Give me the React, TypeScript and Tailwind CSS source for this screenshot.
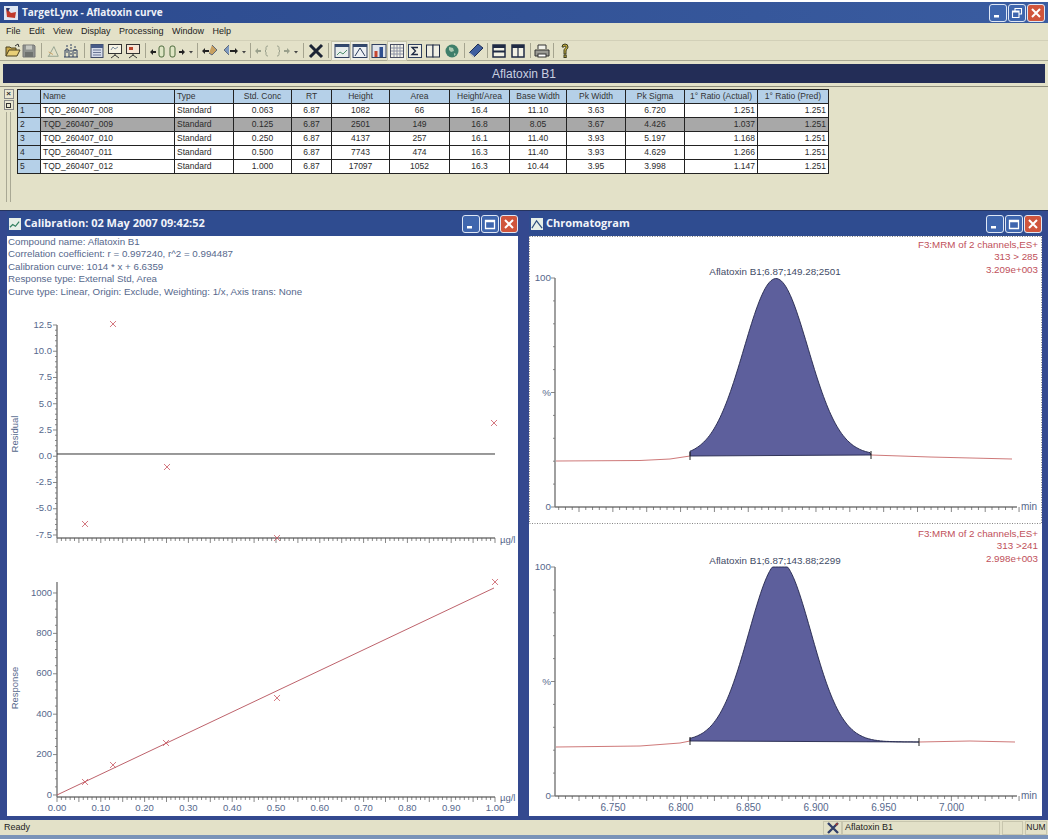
import React from "react";

const SANS = "font-['Liberation_Sans',Arial,sans-serif]";

const columns = [
  { name: "", w: 23, align: "left" },
  { name: "Name", w: 134, align: "left" },
  { name: "Type", w: 59, align: "left" },
  { name: "Std. Conc", w: 58, align: "center" },
  { name: "RT", w: 40, align: "center" },
  { name: "Height", w: 58, align: "center" },
  { name: "Area", w: 60, align: "center" },
  { name: "Height/Area", w: 60, align: "center" },
  { name: "Base Width", w: 57, align: "center" },
  { name: "Pk Width", w: 59, align: "center" },
  { name: "Pk Sigma", w: 59, align: "center" },
  { name: "1° Ratio (Actual)", w: 73, align: "right" },
  { name: "1° Ratio (Pred)", w: 71, align: "right" },
];

const rows = [
  ["1", "TQD_260407_008", "Standard", "0.063", "6.87", "1082", "66", "16.4", "11.10", "3.63", "6.720", "1.251", "1.251"],
  ["2", "TQD_260407_009", "Standard", "0.125", "6.87", "2501", "149", "16.8", "8.05", "3.67", "4.426", "1.037", "1.251"],
  ["3", "TQD_260407_010", "Standard", "0.250", "6.87", "4137", "257", "16.1", "11.40", "3.93", "5.197", "1.168", "1.251"],
  ["4", "TQD_260407_011", "Standard", "0.500", "6.87", "7743", "474", "16.3", "11.40", "3.93", "4.629", "1.266", "1.251"],
  ["5", "TQD_260407_012", "Standard", "1.000", "6.87", "17097", "1052", "16.3", "10.44", "3.95", "3.998", "1.147", "1.251"],
];

function WinButton({ kind }: { kind: "min" | "max" | "restore" | "close" }) {
  const bg = kind === "close" ? "bg-[#d0553c]" : "bg-[#3f66ae]";
  return (
    <div className={`flex h-[18px] w-[18px] items-center justify-center rounded-[3px] border border-[#dfe7f5] ${bg}`}>
      <svg width="12" height="12" viewBox="0 0 12 12">
        {kind === "min" && <rect x="2" y="8" width="5" height="2.5" fill="#fff" />}
        {kind === "max" && <path d="M1.5 2.5h9v8h-9z M1.5 3.5h9" fill="none" stroke="#fff" strokeWidth="1.3" />}
        {kind === "restore" && <path d="M4 3.5V1.5h6.5v5.5H8.5 M1.5 4h6.5v6.5H1.5z M1.5 5h6.5" fill="none" stroke="#fff" strokeWidth="1.1" />}
        {kind === "close" && <path d="M2 2l8 8M10 2l-8 8" stroke="#fff" strokeWidth="2" />}
      </svg>
    </div>
  );
}

function Tool({ k }: { k: string }) {
  const s = { width: 16, height: 16, viewBox: "0 0 16 16" };
  switch (k) {
    case "open":
      return <svg {...s}><path d="M1 13V4h4l1 1h5v2" fill="#c9a94a" stroke="#4a4020" /><path d="M1 13l3-6h11l-3 6z" fill="#e8cf78" stroke="#4a4020" /><path d="M10 3l3-2 1 3" fill="none" stroke="#333" /></svg>;
    case "save":
      return <svg {...s}><path d="M2 2h11l1 1v11H2z" fill="#8f928f" stroke="#777" /><rect x="5" y="2.5" width="6" height="4" fill="#c6c8c2" /><rect x="4" y="9" width="8" height="5" fill="#6f726f" /></svg>;
    case "tri":
      return <svg {...s}><path d="M2 14h12M3 14l6-11 5 11" fill="none" stroke="#8d9d8a" /><path d="M3 9l5 3" stroke="#c9a060" /></svg>;
    case "bars":
      return <svg {...s}><path d="M1 14h14M2 14V7h4v7M10 14V7h4v7" fill="none" stroke="#2f3f5f" /><path d="M4 2v9M8 1v12M12 3v8" stroke="#2f3f5f" strokeDasharray="2 1" /></svg>;
    case "cal":
      return <svg {...s}><rect x="2" y="1.5" width="12" height="13" fill="#d6dcea" stroke="#3f4a66" /><rect x="2" y="1.5" width="12" height="3.5" fill="#465a88" /><path d="M4 7h8M4 9.5h8M4 12h8" stroke="#6b7796" /></svg>;
    case "board":
      return <svg {...s}><rect x="1.5" y="1.5" width="13" height="9" fill="#f6f3e4" stroke="#333" /><path d="M4 7l2-3 2 2 3-2" fill="none" stroke="#7f8f9f" /><path d="M8 10.5V12M4 15l4-3 4 3" fill="none" stroke="#333" /></svg>;
    case "boardr":
      return <svg {...s}><rect x="1.5" y="1.5" width="13" height="9" fill="#f4e4d4" stroke="#333" /><rect x="4" y="4" width="4" height="3" fill="#b8432c" /><path d="M8 10.5V12M4 15l4-3 4 3" fill="none" stroke="#333" /></svg>;
    case "lb":
      return <svg {...s}><path d="M0 9l3-3v2h3v2H3v2z" fill="#222" /><rect x="9" y="3" width="5" height="11" rx="2" fill="#dfe6c4" stroke="#4c6a3c" /></svg>;
    case "br":
      return <svg {...s}><rect x="1" y="3" width="5" height="11" rx="2" fill="#dfe6c4" stroke="#4c6a3c" /><path d="M16 9l-3-3v2h-3v2h3v2z" fill="#222" /></svg>;
    case "drop":
      return <svg width="6" height="16" viewBox="0 0 6 16"><path d="M1 8h4l-2 2.5z" fill="#444" /></svg>;
    case "dl":
      return <svg {...s}><path d="M0 8l3-3v2h4v2H3v2z" fill="#222" /><path d="M10 2l5 5-5 5-3-2" fill="#c8a060" stroke="#5f6a7a" /></svg>;
    case "dr":
      return <svg {...s}><path d="M7 2L2 7l5 5" fill="#7f9ac0" stroke="#5f6a7a" /><path d="M16 8l-3-3v2H8v2h5v2z" fill="#222" /></svg>;
    case "bl":
      return <svg {...s}><path d="M0 8l3-3v2h3v2H3v2z" fill="#9aa08c" /><path d="M13 3c-2 0-2 1-2 2v2l-1 1 1 1v2c0 1 0 2 2 2" fill="none" stroke="#9aa08c" /></svg>;
    case "br2":
      return <svg {...s}><path d="M3 3c2 0 2 1 2 2v2l1 1-1 1v2c0 1 0 2-2 2" fill="none" stroke="#9aa08c" /><path d="M16 8l-3-3v2h-3v2h3v2z" fill="#9aa08c" /></svg>;
    case "x":
      return <svg {...s}><path d="M2 2l12 12M14 2L2 14" stroke="#1c2434" strokeWidth="3" /></svg>;
    case "cal2":
      return <svg {...s}><rect x="1" y="1.5" width="14" height="13" fill="#e8ecec" stroke="#2f3f5f" /><rect x="1" y="1.5" width="14" height="2.5" fill="#33486f" /><path d="M3 12l3-3 3 2 4-4" fill="none" stroke="#4f8f6f" /></svg>;
    case "chrom":
      return <svg {...s}><rect x="1" y="1.5" width="14" height="13" fill="#eef1f4" stroke="#2f3f5f" /><rect x="1" y="1.5" width="14" height="2.5" fill="#33486f" /><path d="M3 13l5-8 5 8" fill="none" stroke="#2f3f5f" /></svg>;
    case "barc":
      return <svg {...s}><rect x="1" y="1.5" width="14" height="13" fill="#dfe4ea" stroke="#2f3f5f" /><rect x="3.5" y="8" width="3" height="6" fill="#c5472f" /><rect x="8.5" y="4" width="3.5" height="10" fill="#2f4f8f" /></svg>;
    case "grid":
      return <svg {...s}><rect x="1.5" y="1.5" width="13" height="13" fill="#f4f3e8" stroke="#4a4f64" /><path d="M5 2v12M8 2v12M11 2v12M2 5h12M2 8h12M2 11h12" stroke="#8b90a4" /></svg>;
    case "sigma":
      return <svg {...s}><rect x="1.5" y="1.5" width="13" height="13" fill="#f0efe4" stroke="#2f3f5f" /><path d="M11 4.5H5l3.5 3.5L5 11.5h6" fill="none" stroke="#1f2a44" strokeWidth="1.3" /></svg>;
    case "book":
      return <svg {...s}><rect x="1.5" y="2" width="6.5" height="12" fill="#f0efe4" stroke="#1f2a44" /><rect x="8" y="2" width="6.5" height="12" fill="#f0efe4" stroke="#1f2a44" /></svg>;
    case "globe":
      return <svg {...s}><circle cx="8" cy="8" r="6.5" fill="#3f7f6a" /><path d="M5 4l4 1 1 3-3 1-2-2zM10 10l2 1-2 2z" fill="#a9c8b0" /></svg>;
    case "bbook":
      return <svg {...s}><path d="M1 10L10 1l5 4-9 9z" fill="#3f5f9f" stroke="#1f2f55" /><path d="M1 10l5 4" stroke="#d8d8c8" strokeWidth="1.5" /></svg>;
    case "winh":
      return <svg {...s}><rect x="2" y="2" width="12" height="12" fill="#f2f1e4" stroke="#1f2a44" strokeWidth="1.5" /><rect x="2" y="2" width="12" height="3" fill="#1f2a44" /><path d="M2 8.5h12" stroke="#1f2a44" strokeWidth="2" /></svg>;
    case "winv":
      return <svg {...s}><rect x="2" y="2" width="12" height="12" fill="#f2f1e4" stroke="#1f2a44" strokeWidth="1.5" /><rect x="2" y="2" width="12" height="3" fill="#1f2a44" /><path d="M8 3v11" stroke="#1f2a44" strokeWidth="1.2" /></svg>;
    case "print":
      return <svg {...s}><path d="M4 6V2h8v4" fill="#f2f2ea" stroke="#333" /><path d="M1 7h14v6H1z" fill="#9a9a94" stroke="#333" /><rect x="4" y="11" width="8" height="3" fill="#fff" stroke="#333" /></svg>;
    case "help":
      return <svg {...s}><path d="M5 4a3 3 0 116 0c0 2-2 2-2 4v3H7V7c0-1 2-2 2-3a1 1 0 00-2 0z" fill="#c9b23c" stroke="#3a3a20" /><rect x="7" y="12" width="2.2" height="2.5" fill="#c9b23c" stroke="#3a3a20" /></svg>;
    default:
      return null;
  }
}

const toolbar: [string, number, boolean?][] = [
  ["open", 17], ["save", 16], ["sep", 9], ["tri", 14], ["bars", 22], ["sep", 5], ["cal", 19], ["board", 18], ["boardr", 18], ["sep", 7],
  ["lb", 18], ["br", 20], ["drop", 8], ["sep", 5], ["dl", 20], ["dr", 20], ["drop", 8], ["sep", 5], ["bl", 19], ["br2", 20], ["drop", 8], ["sep", 7],
  ["x", 18], ["sep", 7], ["cal2", 19, true], ["chrom", 18, true], ["barc", 19], ["grid", 18, true], ["sigma", 18], ["book", 18], ["globe", 20], ["sep", 5],
  ["bbook", 18], ["sep", 4], ["winh", 19], ["winv", 20], ["sep", 5], ["print", 18], ["sep", 5], ["help", 18],
];

const TEXT = "#56688c";
const AXIS = "#777777";
const chartText = { fontFamily: "'Liberation Sans', Arial, sans-serif", fontSize: 9.5 };
const chromText = { fontFamily: "'Liberation Sans', Arial, sans-serif", fontSize: 9.8 };

function Cross({ x, y }: { x: number; y: number }) {
  return <path d={`M${x - 3} ${y - 3}l6 6M${x + 3} ${y - 3}l-6 6`} stroke="#c9565f" strokeWidth="0.8" fill="none" />;
}

function XTicks({ y, x0, x1, major, minor, phase = 0 }: { y: number; x0: number; x1: number; major: number; minor: number; phase?: number }) {
  const items: React.ReactNode[] = [];
  const step = major / minor;
  const n = Math.round((x1 - x0) / step);
  for (let i = 0; i <= n; i++) {
    const x = x0 + i * step;
    const isMajor = Math.abs(((x - x0 - phase) / major) - Math.round((x - x0 - phase) / major)) < 0.02;
    items.push(<line key={i} x1={x} x2={x} y1={y} y2={y + (isMajor ? 5 : 3)} stroke="#555" strokeWidth="0.7" />);
  }
  return <g>{items}</g>;
}

function YTicks({ x, y0, y1, step, majorEvery }: { x: number; y0: number; y1: number; step: number; majorEvery: number }) {
  const items: React.ReactNode[] = [];
  const n = Math.round((y1 - y0) / step);
  for (let i = 0; i <= n; i++) {
    const y = y0 + i * step;
    const m = i % majorEvery === 0;
    items.push(<line key={i} x1={x - (m ? 4 : 2)} x2={x} y1={y} y2={y} stroke="#555" strokeWidth="0.7" />);
  }
  return <g>{items}</g>;
}

function CalibrationChart() {
  const residual = ["12.5", "10.0", "7.5", "5.0", "2.5", "0.0", "-2.5", "-5.0", "-7.5"];
  const resp = [["1000", 593], ["800", 633], ["600", 673], ["400", 714], ["200", 754], ["0", 795]] as [string, number][];
  const xl = ["0.00", "0.10", "0.20", "0.30", "0.40", "0.50", "0.60", "0.70", "0.80", "0.90", "1.00"];
  return (
    <svg className="block min-h-0 w-full flex-1" viewBox="7 298 511 518" preserveAspectRatio="none" style={chartText}>
      {residual.map((t, i) => (
        <text key={t} x={52} y={328 + i * 26.2} textAnchor="end" fill={TEXT}>{t}</text>
      ))}
      <text transform="translate(18 434) rotate(-90)" textAnchor="middle" fill={TEXT}>Residual</text>
      <YTicks x={57} y0={325} y1={535} step={5.25} majorEvery={5} />
      <line x1={57} x2={57} y1={325} y2={538} stroke={AXIS} strokeWidth="1.4" />
      <line x1={57} x2={495} y1={538} y2={538} stroke={AXIS} strokeWidth="1.4" />
      <XTicks y={538} x0={57} x1={495} major={21.9} minor={5} />
      <line x1={57} x2={495} y1={454} y2={454} stroke="#333" strokeWidth="1" />
      <text x={500} y={543} fill={TEXT}>µg/l</text>
      <Cross x={85} y={524} /><Cross x={113} y={324} /><Cross x={167} y={467} /><Cross x={277} y={538} /><Cross x={494} y={423} />

      {resp.map(([t, y]) => (
        <text key={t} x={52} y={y + 3} textAnchor="end" fill={TEXT}>{t}</text>
      ))}
      <text transform="translate(18 688) rotate(-90)" textAnchor="middle" fill={TEXT}>Response</text>
      <YTicks x={57} y0={593} y1={795} step={8.08} majorEvery={5} />
      <line x1={57} x2={57} y1={582} y2={797} stroke={AXIS} strokeWidth="1.4" />
      <line x1={57} x2={495} y1={797} y2={797} stroke={AXIS} strokeWidth="1.4" />
      <XTicks y={797} x0={57} x1={495} major={21.9} minor={5} />
      <text x={500} y={801} fill={TEXT}>µg/l</text>
      {xl.map((t, i) => (
        <text key={t} x={57 + i * 43.8} y={811.5} textAnchor="middle" fill={TEXT}>{t}</text>
      ))}
      <line x1={57} y1={795} x2={494} y2={588} stroke="#b5505a" strokeWidth="0.9" />
      <Cross x={85} y={782} /><Cross x={113} y={765} /><Cross x={166} y={743} /><Cross x={277} y={698} /><Cross x={495} y={582} />
    </svg>
  );
}

function peakPath(x0: number, x1: number, cx: number, top: number, base0: number, base1: number, sl: number, sr: number, amp: number) {
  const pts: string[] = [];
  for (let x = x0; x <= x1; x += 1.5) {
    const s = x < cx ? sl : sr;
    const t = (x - x0) / (x1 - x0);
    const b = base0 + (base1 - base0) * t;
    const y = Math.max(top, b - amp * Math.exp(-((x - cx) ** 2) / (2 * s * s)));
    pts.push(`${x.toFixed(1)} ${y.toFixed(1)}`);
  }
  return `M${x0} ${base0}L${pts.join("L")}L${x1} ${base1}Z`;
}

function ChromPlot({ topY, label, lines, linesY, x0Peak, x1Peak, cx, base0, base1, sl, sr, amp, left, right, showLabels }: any) {
  const bottom = topY + 229;
  const xl = ["6.750", "6.800", "6.850", "6.900", "6.950", "7.000"];
  return (
    <g style={chromText}>
      {lines.map((t: string, i: number) => (
        <text key={t} x={1038} y={linesY + i * 12.4} textAnchor="end" fill="#c0505a">{t}</text>
      ))}
      <text x={775} y={topY - 3} textAnchor="middle" fill="#3f4c66">{label}</text>
      <text x={551} y={topY + 3} textAnchor="end" fill={TEXT}>100</text>
      <text x={551} y={topY + 118} textAnchor="end" fill={TEXT}>%</text>
      <text x={551} y={bottom + 3} textAnchor="end" fill={TEXT}>0</text>
      <YTicks x={555} y0={topY} y1={bottom} step={22.9} majorEvery={5} />
      <line x1={555} x2={555} y1={topY} y2={bottom} stroke={AXIS} strokeWidth="1.4" />
      <line x1={555} x2={1017} y1={bottom} y2={bottom} stroke={AXIS} strokeWidth="1.4" />
      <XTicks y={bottom} x0={558.7} x1={1017} major={33.85} minor={5} phase={20.3} />
      <text x={1021} y={bottom + 3} fill={TEXT} fontSize={10}>min</text>
      <path d={left} fill="none" stroke="#c86a6a" strokeWidth="0.9" />
      <path d={right} fill="none" stroke="#c86a6a" strokeWidth="0.9" />
      <path d={peakPath(x0Peak, x1Peak, cx, topY, base0, base1, sl, sr, amp)} fill="#5d5f9c" stroke="#23264c" strokeWidth="0.9" />
      <line x1={x0Peak} x2={x0Peak} y1={base0 - 4} y2={base0 + 4} stroke="#222" />
      <line x1={x1Peak} x2={x1Peak} y1={base1 - 4} y2={base1 + 4} stroke="#222" />
      {showLabels && xl.map((t, i) => (
        <text key={t} x={613 + i * 67.7} y={811} textAnchor="middle" fill={TEXT} fontSize={10}>{t}</text>
      ))}
    </g>
  );
}

function ChromChart() {
  return (
    <svg className="block h-full w-full" viewBox="529 236 513 580" preserveAspectRatio="none">
      <rect x={529.5} y={236.5} width={512} height={287} fill="none" stroke="#666" strokeWidth="0.8" strokeDasharray="1 1.5" />
      <ChromPlot
        topY={278} label="Aflatoxin B1;6.87;149.28;2501" lines={["F3:MRM of 2 channels,ES+", "313 > 285", "3.209e+003"]} linesY={248}
        x0Peak={690} x1Peak={871} cx={776} base0={456} base1={455} sl={32} sr={32} amp={177}
        left="M556 461L640 460.5L670 459L690 456" right="M871 455L930 457L1012 459"
      />
      <ChromPlot
        topY={567} label="Aflatoxin B1;6.87;143.88;2299" lines={["F3:MRM of 2 channels,ES+", "313 >241", "2.998e+003"]} linesY={537}
        x0Peak={690} x1Peak={919} cx={780} base0={741} base1={742} sl={31} sr={31} amp={180}
        left="M556 747L640 746L680 743L690 741" right="M919 742L970 741L1015 742" showLabels
      />
    </svg>
  );
}

function Panel({ title, icon, className, children }: { title: string; icon: React.ReactNode; className: string; children: React.ReactNode }) {
  return (
    <section className={`flex flex-col bg-[#34498f] pb-[4px] ${className}`}>
      <header className="flex h-[25px] shrink-0 items-center bg-[#2f4c90] pl-[2px]">
        {icon}
        <h2 className="ml-[3px] flex-1 font-['Open_Sans',sans-serif] text-[11px] font-bold text-[#f2f4fa]">{title}</h2>
        <div className="flex gap-[1px]">
          <WinButton kind="min" /><WinButton kind="max" /><WinButton kind="close" />
        </div>
      </header>
      <div className="flex min-h-0 flex-1 flex-col bg-white">{children}</div>
    </section>
  );
}

export default function App() {
  return (
    <div className={`${SANS} flex h-[839px] w-[1048px] flex-col overflow-hidden bg-[#e3e1c8] text-[9px] text-[#2b2b2b]`}>
      <div className="h-[2px] shrink-0 bg-white" />
      <header className="flex h-[21px] shrink-0 items-center bg-linear-to-r from-[#2c4a8e] to-[#3a5ca0] pl-[4px] pr-[3px]">
        <svg width="14" height="14" viewBox="0 0 14 14">
          <rect width="14" height="14" fill="#dfe6f2" />
          <path d="M2 2l5 5 5-1-1 6-8-1z" fill="#c0392b" />
          <path d="M2 2h4L4 6z" fill="#27386b" />
        </svg>
        <h1 className="ml-[4px] flex-1 font-['Open_Sans',sans-serif] text-[10px] font-bold text-[#eef1f8]">TargetLynx - Aflatoxin curve</h1>
        <div className="flex gap-[1px]">
          <WinButton kind="min" /><WinButton kind="restore" /><WinButton kind="close" />
        </div>
      </header>
      <nav className="flex h-[18px] shrink-0 items-center gap-[8.5px] border-b border-[#d2d0b8] pl-[6px] text-[9px] text-[#222]">
        {["File", "Edit", "View", "Display", "Processing", "Window", "Help"].map((m) => (
          <span key={m}>{m}</span>
        ))}
      </nav>
      <div className="flex h-[20px] shrink-0 items-center border-b border-[#a9a894] pl-[4px]">
        {toolbar.map(([k, w, active], i) => (
          <div key={i} style={{ width: w }} className={`flex h-[18px] items-center justify-center ${active ? "bg-[#f0efe4] outline outline-1 outline-[#c8c6ae]" : ""}`}>
            {k === "sep" ? <div className="h-[15px] w-[1px] bg-[#a5a48f]" /> : <Tool k={k} />}
          </div>
        ))}
      </div>
      <div className="mx-[3px] mt-[3px] flex h-[19px] shrink-0 items-center justify-center bg-[#232d57] text-[12px] text-[#c9cfe0]">Aflatoxin B1</div>

      <div className="mt-[3px] flex h-[124px] shrink-0 border-t border-[#8f8e7c]">
        <div className="flex w-[17px] shrink-0 flex-col items-center pt-[2px]">
          <div className="flex h-[10px] w-[10px] items-center justify-center border border-[#888] bg-[#e9e7d2] text-[8px] font-bold leading-none">×</div>
          <div className="mt-[1px] flex h-[10px] w-[10px] items-center justify-center border border-[#888] bg-[#e9e7d2]"><div className="h-[5px] w-[5px] border border-[#333]" /></div>
          <div className="mt-[2px] h-[90px] w-[5px] border-x border-[#a9a894]" />
        </div>
        <div className="pt-[2px]">
          <table className="table-fixed border-collapse border border-[#222] text-[8.5px]" style={{ width: 811 }}>
            <colgroup>
              {columns.map((c, i) => <col key={i} style={{ width: c.w }} />)}
            </colgroup>
            <thead>
              <tr className="h-[14px]">
                {columns.map((c, i) => (
                  <th key={i} className={`border border-[#222] bg-[#b5d0e8] px-[2px] py-0 font-normal leading-none text-[#333] ${c.align === "left" ? "text-left" : "text-center"}`}>{c.name}</th>
                ))}
              </tr>
            </thead>
            <tbody>
              {rows.map((r, ri) => (
                <tr key={ri} className={`h-[14px] ${ri === 1 ? "bg-[#a8a8a8]" : "bg-white"}`}>
                  {r.map((v, ci) => (
                    <td key={ci} className={`border border-[#222] px-[2px] py-0 leading-none ${ci === 0 ? "bg-[#b5d0e8] text-left" : columns[ci].align === "left" ? "text-left" : columns[ci].align === "right" ? "text-right" : "text-center"}`}>{v}</td>
                  ))}
                </tr>
              ))}
            </tbody>
          </table>
        </div>
      </div>

      <main className="flex min-h-0 flex-1 border-t border-[#26345f] bg-[#34498f] pl-[3px] pr-[2px]">
        <Panel
          title="Calibration: 02 May 2007 09:42:52"
          className="w-[519px] px-[4px]"
          icon={
            <svg width="12" height="12" viewBox="0 0 13 13"><rect width="13" height="13" fill="#e6efe8" /><path d="M1 10l3-3 3 2 4-5" fill="none" stroke="#2f7f5f" strokeWidth="1.3" /></svg>
          }
        >
          <div className="shrink-0 pl-[1px] text-[9.75px] leading-[12.4px] text-[#56688c]">
            <p>Compound name: Aflatoxin B1</p>
            <p>Correlation coefficient: r = 0.997240, r^2 = 0.994487</p>
            <p>Calibration curve: 1014 * x + 6.6359</p>
            <p>Response type: External Std, Area</p>
            <p>Curve type: Linear, Origin: Exclude, Weighting: 1/x, Axis trans: None</p>
          </div>
          <CalibrationChart />
        </Panel>
        <Panel
          title="Chromatogram"
          className="ml-[2px] w-[522px] pl-[5px] pr-[4px]"
          icon={
            <svg width="12" height="12" viewBox="0 0 13 13"><rect width="13" height="13" fill="#e6efe8" /><path d="M1 11l5-8 6 8" fill="none" stroke="#2f4f7f" strokeWidth="1.3" /></svg>
          }
        >
          <ChromChart />
        </Panel>
      </main>

      <footer className="flex h-[15px] shrink-0 items-center pr-[1px]">
        <span className="flex-1 pl-[4px] text-[9px] text-[#222]">Ready</span>
        <div className="flex h-[14px] w-[19px] items-center justify-center border border-[#c8c6ae]">
          <svg width="12" height="12" viewBox="0 0 12 12"><path d="M1 1l10 10M11 1L1 11" stroke="#33406a" strokeWidth="2.4" /><path d="M8 2l3-1-1 3" fill="#b03a2a" /></svg>
        </div>
        <div className="flex h-[14px] w-[158px] items-center border border-[#c8c6ae] pl-[2px] text-[9px] text-[#222]">Aflatoxin B1</div>
        <div className="ml-[2px] h-[14px] w-[21px] border border-[#c8c6ae]" />
        <div className="ml-[2px] flex h-[14px] w-[22px] items-center justify-center border border-[#c8c6ae] text-[8.5px] text-[#222]">NUM</div>
      </footer>
      <div className="h-[4px] shrink-0 bg-[#7a93b8]" />
    </div>
  );
}
